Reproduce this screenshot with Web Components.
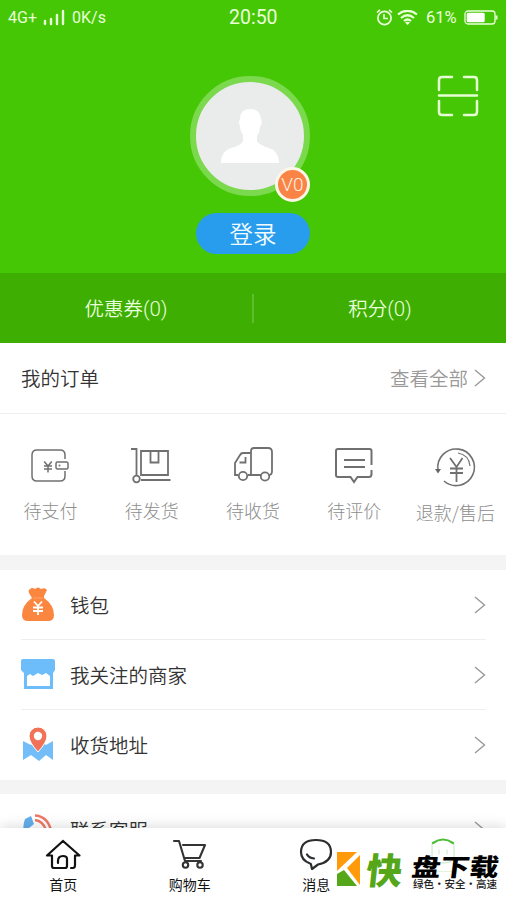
<!DOCTYPE html>
<html lang="zh-CN">
<head>
<meta charset="utf-8">
<title>我的</title>
<style>
html,body{margin:0;height:900px;overflow:hidden;background:#fff}
body{font-family:Roboto,"Noto Sans CJK SC",sans-serif}
</style>
</head>
<body>
<mine-page></mine-page>
<script>
const define = (name, html) => customElements.define(name, class extends HTMLElement {
  constructor() {
    super();
    this.attachShadow({mode: 'open'}).innerHTML = html;
  }
});

const icons = {
  pay: `<g stroke-width="1.5"><path d="M34 12V8Q34 3 29 3H6Q1 3 1 8V29Q1 34 6 34H29Q34 34 34 29V24"/><rect x="25" y="15" width="12" height="7" rx="1.5"/><path d="M13.2 14.5l3.8 4.5 3.8-4.5M13 19h8M13 22h8M17 19v6.5"/></g><circle cx="28.5" cy="18.5" r="1" fill="#777" stroke="none"/>`,
  ship: `<g stroke-width="1.8"><path d="M-1 2H4.5V29M9 33H38.5"/><circle cx="4.5" cy="32" r="3.3"/><path d="M9 4H36V28H9zM18.5 4V15.5H26.5V4"/></g>`,
  truck: `<g stroke-width="1.8"><path d="M17 6H9Q7 6 6 8L1 16V28H4M14 28H27M17 28V4Q17 1 20 1H34Q38 1 38 5V24Q38 28 35 28M11.5 10V15.5H5.5"/><circle cx="9" cy="29" r="4.2"/><circle cx="31" cy="29.5" r="4.2"/></g>`,
  comment: `<g stroke-width="2"><path d="M36.5 18V4Q36.5 2 34.5 2H3Q1 2 1 4V28Q1 30 3 30H15.5L19 35L22.5 30H34Q36.5 30 36.5 27V23"/><path d="M9 13H30M9 20H30"/></g>`,
  refund: `<g stroke-width="1.6"><path d="M2 22A18.3 18.3 0 1 1 8 33"/><path d="M22 5Q33 7 34 18" stroke-width="1.2"/><path d="M14 10L20.5 19L26.5 10M14 20.5H27M14 25H27M20.5 19V34" stroke-width="1.8"/></g><path d="M-1 21H5L2 25.5z" fill="#666" stroke="none"/>`
};

define('status-bar', `<style>
:host{display:flex;height:36px;align-items:center;color:#e9ffda;font:17px/20px Roboto,sans-serif;box-sizing:border-box;padding-left:8px}
.net{width:35px;font-size:16px;white-space:nowrap}.speed{width:157px;padding-left:6px;font-size:16px}.time{width:147px;font-size:19.5px}svg{display:block;fill:none;stroke:#e9ffda}.pct{font-size:16.5px;width:34px;margin-left:8px}
.battery{margin-left:4px}
</style>
<span class="net">4G+</span>
<svg width="23" height="18" viewBox="0 0 23 18"><path d="M2 12V15M8 10V15M14 6V15M20 2V15" stroke-width="2.4" stroke-linecap="round"/></svg>
<span class="speed">0K/s</span><span class="time">20:50</span>
<svg width="17" height="18" viewBox="0 0 17 18"><circle cx="8.5" cy="9" r="6.6" stroke-width="1.7"/><path d="M8 5V9.5H12M1 3.5L4 .8M13 .8L16 3.5" stroke-width="1.6"/></svg>
<svg style="margin-left:4px" width="21" height="17" viewBox="0 0 21 17"><path d="M1 4.5Q10.5-3 20 4.5M4 8Q10.5 2.5 17 8M7 11Q10.5 8 14 11" stroke-width="2.2"/><path d="M8 12.5Q10.5 11 13 12.5L10.5 15z" fill="#e9ffda" stroke="none"/></svg>
<span class="pct">61%</span>
<svg class="battery" width="35" height="16" viewBox="0 0 35 16"><rect x="1" y="1" width="30" height="13" rx="3" stroke-width="1.3"/><rect x="2.7" y="2.7" width="18" height="9.6" rx="1.5" fill="#fff" stroke="none"/><path d="M32.5 5.5V9.5" stroke-width="2"/></svg>`);

define('user-avatar', `<style>
:host{display:block;position:relative;width:108px;height:108px;border:6px solid #7ad94d;border-radius:50%;background:#eaebeb}
svg{display:block}.badge{position:absolute;left:79px;top:85px;width:29px;height:29px;border:3px solid #fff6ea;border-radius:50%;background:#fa8445;color:#fff1e4;font:300 19px/30px Roboto,sans-serif;text-align:center}
</style><svg width="108" height="108" viewBox="0 0 108 108"><path fill="#fff" d="M25 81Q25 69 35 66Q46 63 47 59V53Q44 49 44 44Q42 40 44 37Q44 27 54 27Q64 27 65 37Q67 41 64 45Q64 50 61 54V59Q63 63 73 66Q83 69 83 81z"/></svg><span class="badge">V0</span>`);

define('profile-hero', `<style>
:host{display:block;height:273px;background:#46c705}
.body{display:grid;grid-template-columns:1fr 120px 1fr;padding-top:40px;box-sizing:border-box;width:500px}
.scan{justify-self:end;margin-right:21px;margin-top:-1px}
button{display:block;width:114px;height:41px;border:0;padding:0;border-radius:21px;background:#289ded;color:#f2fcff;font:350 23.5px/41px "Noto Sans CJK SC",sans-serif;margin:17px 0 0 196px}
</style><status-bar></status-bar><div class="body"><i></i><user-avatar></user-avatar>
<svg class="scan" width="42" height="42" viewBox="0 0 42 42" fill="none" stroke="#e5ffd2" stroke-width="2.5" stroke-linecap="round"><path d="M2 15V5Q2 2 5 2H15M27 2H37Q40 2 40 5V15M2 26V37Q2 40 5 40H15M27 40H37Q40 40 40 37V26M2 20.5H40"/></svg></div><button>登录</button>`);

define('stat-bar', `<style>
:host{display:flex;align-items:center;height:70px;box-sizing:border-box;padding-top:1px;background:#3eae03;color:#e9ffdb;font:350 19.5px/30px "Noto Sans CJK SC",sans-serif}
span{flex:1;text-align:center}b{font:300 20.5px/30px Roboto,sans-serif}i{width:2px;height:29px;background:#60bd30}
</style><span>优惠券<b>(0)</b></span><i></i><span>积分<b>(0)</b></span>`);

define('chevron-right', `<style>:host{display:block;width:12px;height:20px}svg{display:block}</style><svg width="12" height="20" viewBox="0 0 12 20"><path d="M1 2L10.5 10L1 18" fill="none" stroke="#999" stroke-width="1.4"/></svg>`);

define('order-head', `<style>
:host{display:flex;height:71px;box-sizing:border-box;border-bottom:1px solid #eee;align-items:center;padding:0 20px 0 21px;font:350 19.5px/30px "Noto Sans CJK SC",sans-serif;color:#333}
.all{margin-left:auto;margin-right:6px;color:#999}
</style><span>我的订单</span><span class="all">查看全部</span><chevron-right></chevron-right>`);

customElements.define('order-state', class extends HTMLElement {
  constructor() {
    super();
    this.attachShadow({mode: 'open'}).innerHTML = `<style>
:host{display:flex;flex-direction:column;align-items:center;flex:1;padding-top:33px;color:#8d8d8d;font:300 18px/28px "Noto Sans CJK SC",sans-serif;white-space:nowrap}
svg{display:block;overflow:visible;margin:0 1px 11px 0;stroke:#707070;fill:none}
:host([icon=refund]) svg{margin:1px 1px 12px 0}
</style><svg width="38" height="38" viewBox="0 0 38 38">${icons[this.getAttribute('icon')]}</svg><slot></slot>`;
  }
});

define('order-states', `<style>:host{display:flex;height:141px}</style>
<order-state icon="pay">待支付</order-state><order-state icon="ship">待发货</order-state><order-state icon="truck">待收货</order-state><order-state icon="comment">待评价</order-state><order-state icon="refund">退款/售后</order-state>`);

const menuIcons = {
  wallet: `<path fill="#fb863f" d="M9 2Q11 0 14 2Q17-1 20 2Q24 0 26 3L23 9V11Q33 18 33 28Q33 34 27 34H7Q1 34 1 28Q1 18 11 11L8 6Q7 3 9 2z"/><path d="M12 11H22" stroke="#fda26c" stroke-width="1"/><path d="M13 14.5L17 19L21 14.5M12 20.5H22M12 24H22M17 19V28" fill="none" stroke="#fff" stroke-width="1.8"/>`,
  shop: `<path fill="#6dbdfb" d="M2 2H32Q34 2 34 4V13L32 16V32H3V16L0 13V4Q0 2 2 2z"/><path fill="#fff" d="M6 19L9 17L12 19L17 16L21 18L25 16L29 19V29H6z"/>`,
  address: `<path fill="#73bdf8" d="M2 14L10 18L17 14L25 18L32 14V33L25 28L18 34L10 28L2 33z"/><path fill="#f27257" stroke="#fff" stroke-width="1" d="M17 25Q8 15 8 9A9 9 0 0 1 26 9Q26 15 17 25z"/><circle cx="17" cy="9" r="4.2" fill="#fff"/>`,
  service: `<path fill="#64afed" d="M4 6L10 3L13 11L8 15Q9 24 18 31L13 34Q-2 22 4 6z"/><path d="M14 2.5Q26 3 30 17M14 7Q22 8 25 17" fill="none" stroke="#ef7966" stroke-width="2.5"/>`
};
customElements.define('menu-row', class extends HTMLElement {
  constructor() {
    super();
    this.attachShadow({mode: 'open'}).innerHTML = `<style>
:host{display:flex;align-items:center;height:70px;box-sizing:border-box;margin:0 20px 0 21px;border-bottom:1px solid #eee;color:#333;font:350 19.5px/30px "Noto Sans CJK SC",sans-serif}
:host([last]){border-color:transparent}
:host([icon=service]){height:73px}
svg{display:block;margin-right:15px}chevron-right{margin-left:auto}
</style><svg width="34" height="35" viewBox="0 0 34 35">${menuIcons[this.getAttribute('icon')]}</svg><slot></slot><chevron-right></chevron-right>`;
  }
});

const tabIcons = {
  home: `<path d="M18 3L2 17.5H7V28Q7 30 9 30H20Q22 30 22 28V21Q22 18 18 18Q13 18 13 23V25M26 30H28Q30 30 30 27V17.5H34.5L18 3" stroke="#111" stroke-width="2.2"/>`,
  cart: `<g stroke="#333" stroke-width="2.1"><path d="M2 3H7L13 23H29M11 7H33L27.5 20H13"/><circle cx="13.5" cy="27" r="2.7"/><circle cx="28" cy="27" r="2.7"/></g>`,
  message: `<path d="M13 26.5L14 31L20 26.5Q33 24 33 14Q33 2 18 2Q3 2 3 14Q3 22 12 25.5Q13 25.5 13 26.5M9 16.5Q11 20 16 20.5" stroke="#2b2d2f" stroke-width="2.2"/>`,
  mine: `<g stroke="#c3e8bd" stroke-width="1"><path d="M7 6V18Q7 25 18 25Q29 25 29 18V6M14 12V16M22 12V16M6 26V34H30V26"/></g><path d="M8 5Q18-2 28 5" stroke="#4dbe36" stroke-width="2.2"/>`
};
customElements.define('tab-item', class extends HTMLElement {
  constructor() {
    super();
    this.attachShadow({mode: 'open'}).innerHTML = `<style>
:host{display:flex;flex-direction:column;align-items:center;flex:1;padding-top:10px;color:#111;font:400 14px/20px "Noto Sans CJK SC",sans-serif}
svg{display:block;margin-bottom:2px;fill:none;stroke-linejoin:round;stroke-linecap:round}
</style><svg width="36" height="34" viewBox="0 0 36 34">${tabIcons[this.getAttribute('icon')]}</svg><slot></slot>`;
  }
});

define('site-mark', `<style>
:host{display:grid;grid-template-columns:24px 41px 88px;column-gap:5px;position:absolute;left:337px;top:20px;height:50px;width:169px}
.logo{margin-top:3px}.fast{font:900 36px/36px "Noto Sans CJK SC",sans-serif;color:#55a719;transform:skewX(-6deg);margin-top:2px}
.name{color:#000;font:900 29px/27px "Noto Sans CJK SC",sans-serif;height:27px;white-space:nowrap;margin-top:4px;transform:scaleY(.84) skewX(-6deg)}
.tag{display:flex;justify-content:space-between;width:84px;font:500 10.5px/11px "Noto Sans CJK SC",sans-serif;color:#222;white-space:nowrap;margin:-1px 0 0 1px}
svg{display:block}
</style><svg class="logo" width="24" height="36" viewBox="0 0 24 36"><path fill="#ff9b0b" d="M0 1H20L0 20z"/><path fill="#ff9b0b" d="M23 4V34L10 17z"/><path fill="#55a719" d="M0 23L7 19L20 35H0z"/></svg><span class="fast">快</span><div><div class="name">盘下载</div><div class="tag"><span>绿色</span><span>·</span><span>安全</span><span>·</span><span>高速</span></div></div>`);

define('tab-bar', `<style>:host{display:flex;position:absolute;left:0;right:0;bottom:0;height:72px;background:#fff;box-shadow:0 -2px 12px #0002}</style>
<tab-item icon="home">首页</tab-item><tab-item icon="cart">购物车</tab-item><tab-item icon="message">消息</tab-item><tab-item icon="mine"></tab-item><site-mark></site-mark>`);

define('mine-page', `<style>:host{display:block;position:relative;width:506px;height:900px;overflow:hidden;background:#fff}.gap{height:15px;background:#f4f4f4}.gap.two{height:14px}</style>
<profile-hero></profile-hero><stat-bar></stat-bar><order-head></order-head><order-states></order-states><div class="gap"></div>
<menu-row icon="wallet">钱包</menu-row><menu-row icon="shop">我关注的商家</menu-row><menu-row icon="address" last>收货地址</menu-row><div class="gap two"></div><menu-row icon="service" last>联系客服</menu-row><tab-bar></tab-bar>`);
</script>
</body>
</html>
